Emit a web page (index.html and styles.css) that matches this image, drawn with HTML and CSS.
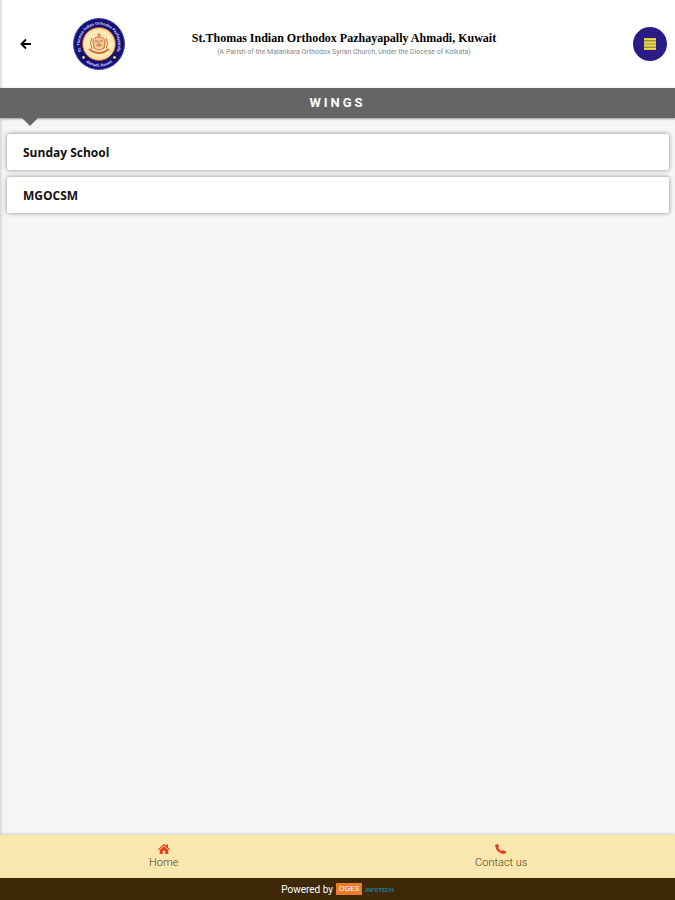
FILE: index.html
```
<!DOCTYPE html>
<html lang="en">
<head>
  <meta charset="UTF-8" />
  <meta name="viewport" content="width=device-width, initial-scale=1" />
  <title>Wings</title>
  <link rel="stylesheet" href="styles.css">
</head>
<body>

<header class="header">
  <div class="header-back">
    <button class="back-btn" type="button" aria-label="Back">
      <svg width="12" height="12" viewBox="0 0 12 12" fill="none" stroke="#000" stroke-width="2">
        <path d="M6 1.5 L1.5 6 L6 10.5 M2 6 H11" />
      </svg>
    </button>
  </div>

  <div class="header-logo">
    <svg class="logo" viewBox="0 0 52 52">
      <defs>
        <path id="ring-top" d="M8.8 34.5 A19.2 19.2 0 1 1 43.2 34.5" />
        <path id="ring-bottom" d="M11 43 A23 23 0 0 0 41 43" />
      </defs>
      <circle cx="26" cy="26" r="25.5" fill="#14107a" stroke="#4a4a98" />
      <circle cx="26" cy="26" r="16.5" fill="#f9dfa0" stroke="#b5561c" />
      <circle cx="26" cy="26" r="14" fill="#fdebb9" />
      <text class="logo-text"><textPath href="#ring-top" startOffset="50%" text-anchor="middle">St. Thomas Indian Orthodox Pazhayapally</textPath></text>
      <text class="logo-text"><textPath href="#ring-bottom" startOffset="50%" text-anchor="middle">Ahmadi, Kuwait</textPath></text>
      <circle cx="10.5" cy="39.5" r="1.4" fill="#e8d660" />
      <circle cx="41.5" cy="39.5" r="1.4" fill="#e8d660" />
      <g fill="none" stroke="#cf7038" stroke-width="1">
        <path d="M26 15 V19 M24 17 H28" />
        <path d="M20 24 Q20 19 26 19 Q32 19 32 24 L31 30 Q26 34 21 30 Z" fill="#f4c89a" />
        <path d="M19 20 Q16 25 19 31 M33 20 Q36 25 33 31" />
        <path d="M22 23 H25 M27 23 H30 M26 23 V29 M23 27 H29" />
        <path d="M16 31 Q26 39 36 31" stroke-width="2" />
      </g>
    </svg>
  </div>

  <div class="header-title">
    <div class="church-name">St.Thomas Indian Orthodox Pazhayapally Ahmadi, Kuwait</div>
    <div class="church-sub">(A Parish of the Malankara Orthodox Syrian Church, Under the Diocese of Kolkata)</div>
  </div>

  <div class="header-menu">
    <button class="menu-btn" type="button" aria-label="Menu">
      <svg width="12" height="12" viewBox="0 0 12 12">
        <rect width="12" height="12" fill="#9c8a50" />
        <path d="M0 1.2 H12 M0 4.5 H12 M0 7.5 H12 M0 10.8 H12" stroke="#ecdc45" stroke-width="1.8" />
      </svg>
    </button>
  </div>
</header>

<h1 class="page-title">WINGS</h1>

<main class="wings">
  <a class="wing" href="#">Sunday School</a>
  <a class="wing" href="#">MGOCSM</a>
</main>

<nav class="bottom-nav">
  <a class="nav-item" href="#">
    <svg width="12" height="10" viewBox="0 0 12 10" fill="#e5401c">
      <path d="M6 0 L8 1.8 V0.6 H10 V3.5 L12 5.3 L11.3 6 L6 1.5 L0.7 6 L0 5.3 Z" />
      <path d="M6 2.4 L10.3 6 V10 H7.2 V6.8 H4.8 V10 H1.7 V6 Z" />
    </svg>
    <span>Home</span>
  </a>
  <a class="nav-item" href="#">
    <svg width="12" height="10" viewBox="0 0 12 10" fill="#e5401c">
      <path d="M0.8 0.6 L2.8 0 L4.1 2.6 L3.1 3.7 Q4.4 5.9 6.8 7 L8 6 L11 7.2 L10.6 9.2 Q10 10 8.7 10 Q5.5 9.8 3 7.5 Q0.4 4.9 0.2 2 Q0.2 1 0.8 0.6 Z" />
    </svg>
    <span>Contact us</span>
  </a>
</nav>

<footer class="powered">
  <span>Powered by</span>
  <span class="brand">OGES</span>
  <span class="brand-sub">INFOTECH</span>
</footer>

</body>
</html>
```
FILE: styles.css
```
* {
  box-sizing: border-box;
}

body {
  display: flex;
  flex-direction: column;
  min-height: 100vh;
  margin: 0;
  background: #f5f5f5;
  font-family: Roboto, sans-serif;
  box-shadow: inset 3px 0 3px -2px #ccc;
}

a {
  color: inherit;
  text-decoration: none;
}

button {
  display: flex;
  align-items: center;
  justify-content: center;
  padding: 0;
  border: none;
  background: none;
  cursor: pointer;
}

.header {
  display: flex;
  align-items: center;
  height: 88px;
  background: #fff;
  box-shadow: inset 3px 0 3px -2px #ccc;
}

.header-back {
  display: flex;
  justify-content: center;
  width: 51px;
}

.header-logo {
  display: flex;
  justify-content: center;
  width: 96px;
}

.logo {
  width: 52px;
  height: 52px;
}

.logo-text {
  fill: #d5d5f0;
  font-family: Roboto, sans-serif;
  font-size: 4px;
  font-weight: bold;
}

.header-title {
  flex: 1;
  text-align: center;
  white-space: nowrap;
}

.church-name {
  color: #000;
  font-family: Baskerville, "Liberation Serif", serif;
  font-size: 12px;
  font-weight: bold;
  line-height: 16px;
}

.church-sub {
  color: #888;
  font-size: 7px;
  line-height: 12px;
}

.header-menu {
  display: flex;
  justify-content: flex-end;
  width: 134px;
  padding-right: 8px;
}

.menu-btn {
  width: 34px;
  height: 34px;
  border-radius: 50%;
  background: #281c86;
}

.page-title {
  position: relative;
  height: 30px;
  margin: 0;
  background: #656565;
  box-shadow: 0 1px 2px #999;
  color: #fff;
  font-size: 13px;
  font-weight: bold;
  letter-spacing: 3px;
  line-height: 30px;
  text-align: center;
}

.page-title::after {
  content: "";
  position: absolute;
  top: 100%;
  left: 22px;
  border: 8px solid transparent;
  border-top-color: #656565;
  border-bottom: none;
}

.wings {
  display: flex;
  flex: 1;
  flex-direction: column;
  gap: 7px;
  padding: 16px 6px 16px 7px;
}

.wing {
  padding: 1px 16px 0;
  border-radius: 2px;
  background: #fff;
  box-shadow: 0 0 4px #888;
  color: #111;
  font-family: "Open Sans", sans-serif;
  font-size: 12px;
  font-weight: bold;
  line-height: 35px;
}

.bottom-nav {
  display: flex;
  height: 43px;
  background: #fae7ae;
  box-shadow: 0 -1px 3px #ccc;
}

.nav-item {
  display: flex;
  flex: 1;
  flex-direction: column;
  align-items: center;
  padding: 9px 10px 0 0;
  color: #4d4128;
  font-size: 11px;
  font-weight: 300;
  line-height: 18px;
}

.powered {
  display: flex;
  align-items: center;
  justify-content: center;
  gap: 3px;
  height: 22px;
  background: #3e2807;
  color: #fff;
  font-size: 10px;
}

.brand {
  padding: 0 3px;
  background: #e87b2c;
  font-size: 8px;
  line-height: 12px;
}

.brand-sub {
  color: #2478a4;
  font-size: 6px;
  font-weight: bold;
}
```
